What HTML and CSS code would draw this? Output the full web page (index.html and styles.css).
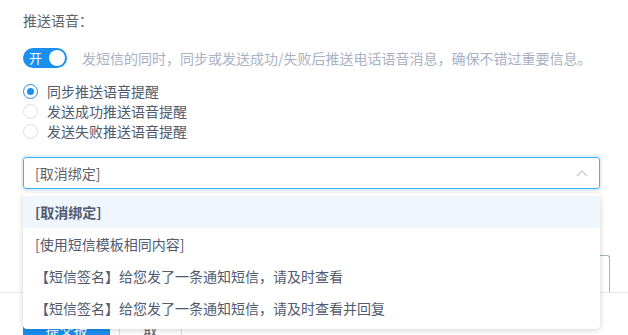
FILE: index.html
```html
<!DOCTYPE html>
<html lang="zh-CN">
<head>
    <meta charset="UTF-8">
    <title>推送语音</title>
    <link rel="stylesheet" href="styles.css">
</head>
<body>
    <div class="form">
        <div class="form-label">推送语音：</div>

        <div class="switch-row">
            <span class="switch">
                <span class="switch-text">开</span>
                <span class="switch-knob"></span>
            </span>
            <span class="switch-tip">发短信的同时，同步或发送成功/失败后推送电话语音消息，确保不错过重要信息。</span>
        </div>

        <div class="radio-group">
            <label class="radio checked"><span class="radio-dot"></span>同步推送语音提醒</label>
            <label class="radio"><span class="radio-dot"></span>发送成功推送语音提醒</label>
            <label class="radio"><span class="radio-dot"></span>发送失败推送语音提醒</label>
        </div>

        <div class="select">
            <div class="select-box">
                <span class="select-value">[取消绑定]</span>
                <svg class="select-arrow" width="12" height="8" viewBox="0 0 12 8">
                    <path d="M1 7 L6 2 L11 7" fill="none" stroke="#c5c8ce" stroke-width="1.2"/>
                </svg>
            </div>
            <ul class="dropdown">
                <li class="option selected">[取消绑定]</li>
                <li class="option">[使用短信模板相同内容]</li>
                <li class="option">【短信签名】给您发了一条通知短信，请及时查看</li>
                <li class="option">【短信签名】给您发了一条通知短信，请及时查看并回复</li>
            </ul>
        </div>

        <div class="textarea"></div>
    </div>

    <div class="footer">
        <button class="btn btn-primary">提交报审</button>
        <button class="btn">取消</button>
    </div>
</body>
</html>
```

FILE: styles.css
```css
body {
    margin: 0;
    background: #fff;
    font-family: "Noto Sans CJK SC", "Liberation Sans", sans-serif;
    font-size: 14px;
    color: #515a6e;
    overflow: hidden;
}

.form {
    padding: 10px 19px 0 23px;
}

.form-label {
    line-height: 20px;
    color: #606266;
}

/* 开关 */
.switch-row {
    display: flex;
    align-items: center;
    margin-top: 18px;
    height: 20px;
}

.switch {
    position: relative;
    display: inline-flex;
    align-items: center;
    width: 44px;
    height: 20px;
    border-radius: 10px;
    background: #1a8ff0;
    flex-shrink: 0;
}

.switch-text {
    color: #fff;
    font-size: 13px;
    margin-left: 6px;
    line-height: 20px;
}

.switch-knob {
    position: absolute;
    right: 2px;
    top: 2px;
    width: 16px;
    height: 16px;
    border-radius: 50%;
    background: #fff;
}

.switch-tip {
    margin-left: 15px;
    color: #a9b1c4;
    line-height: 20px;
    white-space: nowrap;
}

/* 单选 */
.radio-group {
    margin-top: 13px;
}

.radio {
    display: flex;
    align-items: center;
    height: 20px;
    line-height: 20px;
    color: #515a6e;
}

.radio-dot {
    box-sizing: border-box;
    width: 15px;
    height: 15px;
    border: 1px solid #dcdee2;
    border-radius: 50%;
    margin-right: 9px;
    position: relative;
}

.radio.checked .radio-dot {
    border-color: #1a8ff0;
}

.radio.checked .radio-dot::after {
    content: "";
    position: absolute;
    left: 3px;
    top: 3px;
    width: 7px;
    height: 7px;
    border-radius: 50%;
    background: #1a8ff0;
}

/* 下拉框 */
.select {
    position: relative;
    margin-top: 16px;
    width: 577px;
    z-index: 2;
}

.select-box {
    box-sizing: border-box;
    height: 32px;
    border: 1px solid #3fb2f6;
    border-radius: 3px;
    box-shadow: 0 0 0 2px rgba(45, 160, 240, 0.15);
    display: flex;
    align-items: center;
    padding: 0 11px;
}

.select-value {
    flex: 1;
    color: #606266;
}

.dropdown {
    position: absolute;
    left: 0;
    right: 0;
    top: 36px;
    margin: 0;
    padding: 3px 0 5px;
    list-style: none;
    background: #fff;
    border-radius: 4px;
    box-shadow: 0 1px 6px rgba(0, 0, 0, 0.18);
}

.option {
    height: 32px;
    line-height: 32px;
    padding: 0 12px;
    color: #515a6e;
    white-space: nowrap;
}

.option.selected {
    background: #f0f6fe;
    font-weight: bold;
}

/* 被遮住的部分 */
.textarea {
    box-sizing: border-box;
    margin-top: 66px;
    width: 587px;
    height: 37px;
    border: 1px solid #a3afc4;
    border-bottom: none;
    border-radius: 3px 3px 0 0;
}

.footer {
    border-top: 1px solid #e8eaec;
    padding: 25px 23px 0;
    display: flex;
    gap: 9px;
}

.btn {
    box-sizing: border-box;
    height: 32px;
    padding: 0 18px;
    border: 1px solid #dcdee2;
    border-radius: 3px;
    background: #fff;
    color: #515a6e;
    font-family: inherit;
    font-size: 14px;
    width: 63px;
}

.btn-primary {
    width: 87px;
    background: #1a8ff0;
    border-color: #1a8ff0;
    color: #fff;
}
```
